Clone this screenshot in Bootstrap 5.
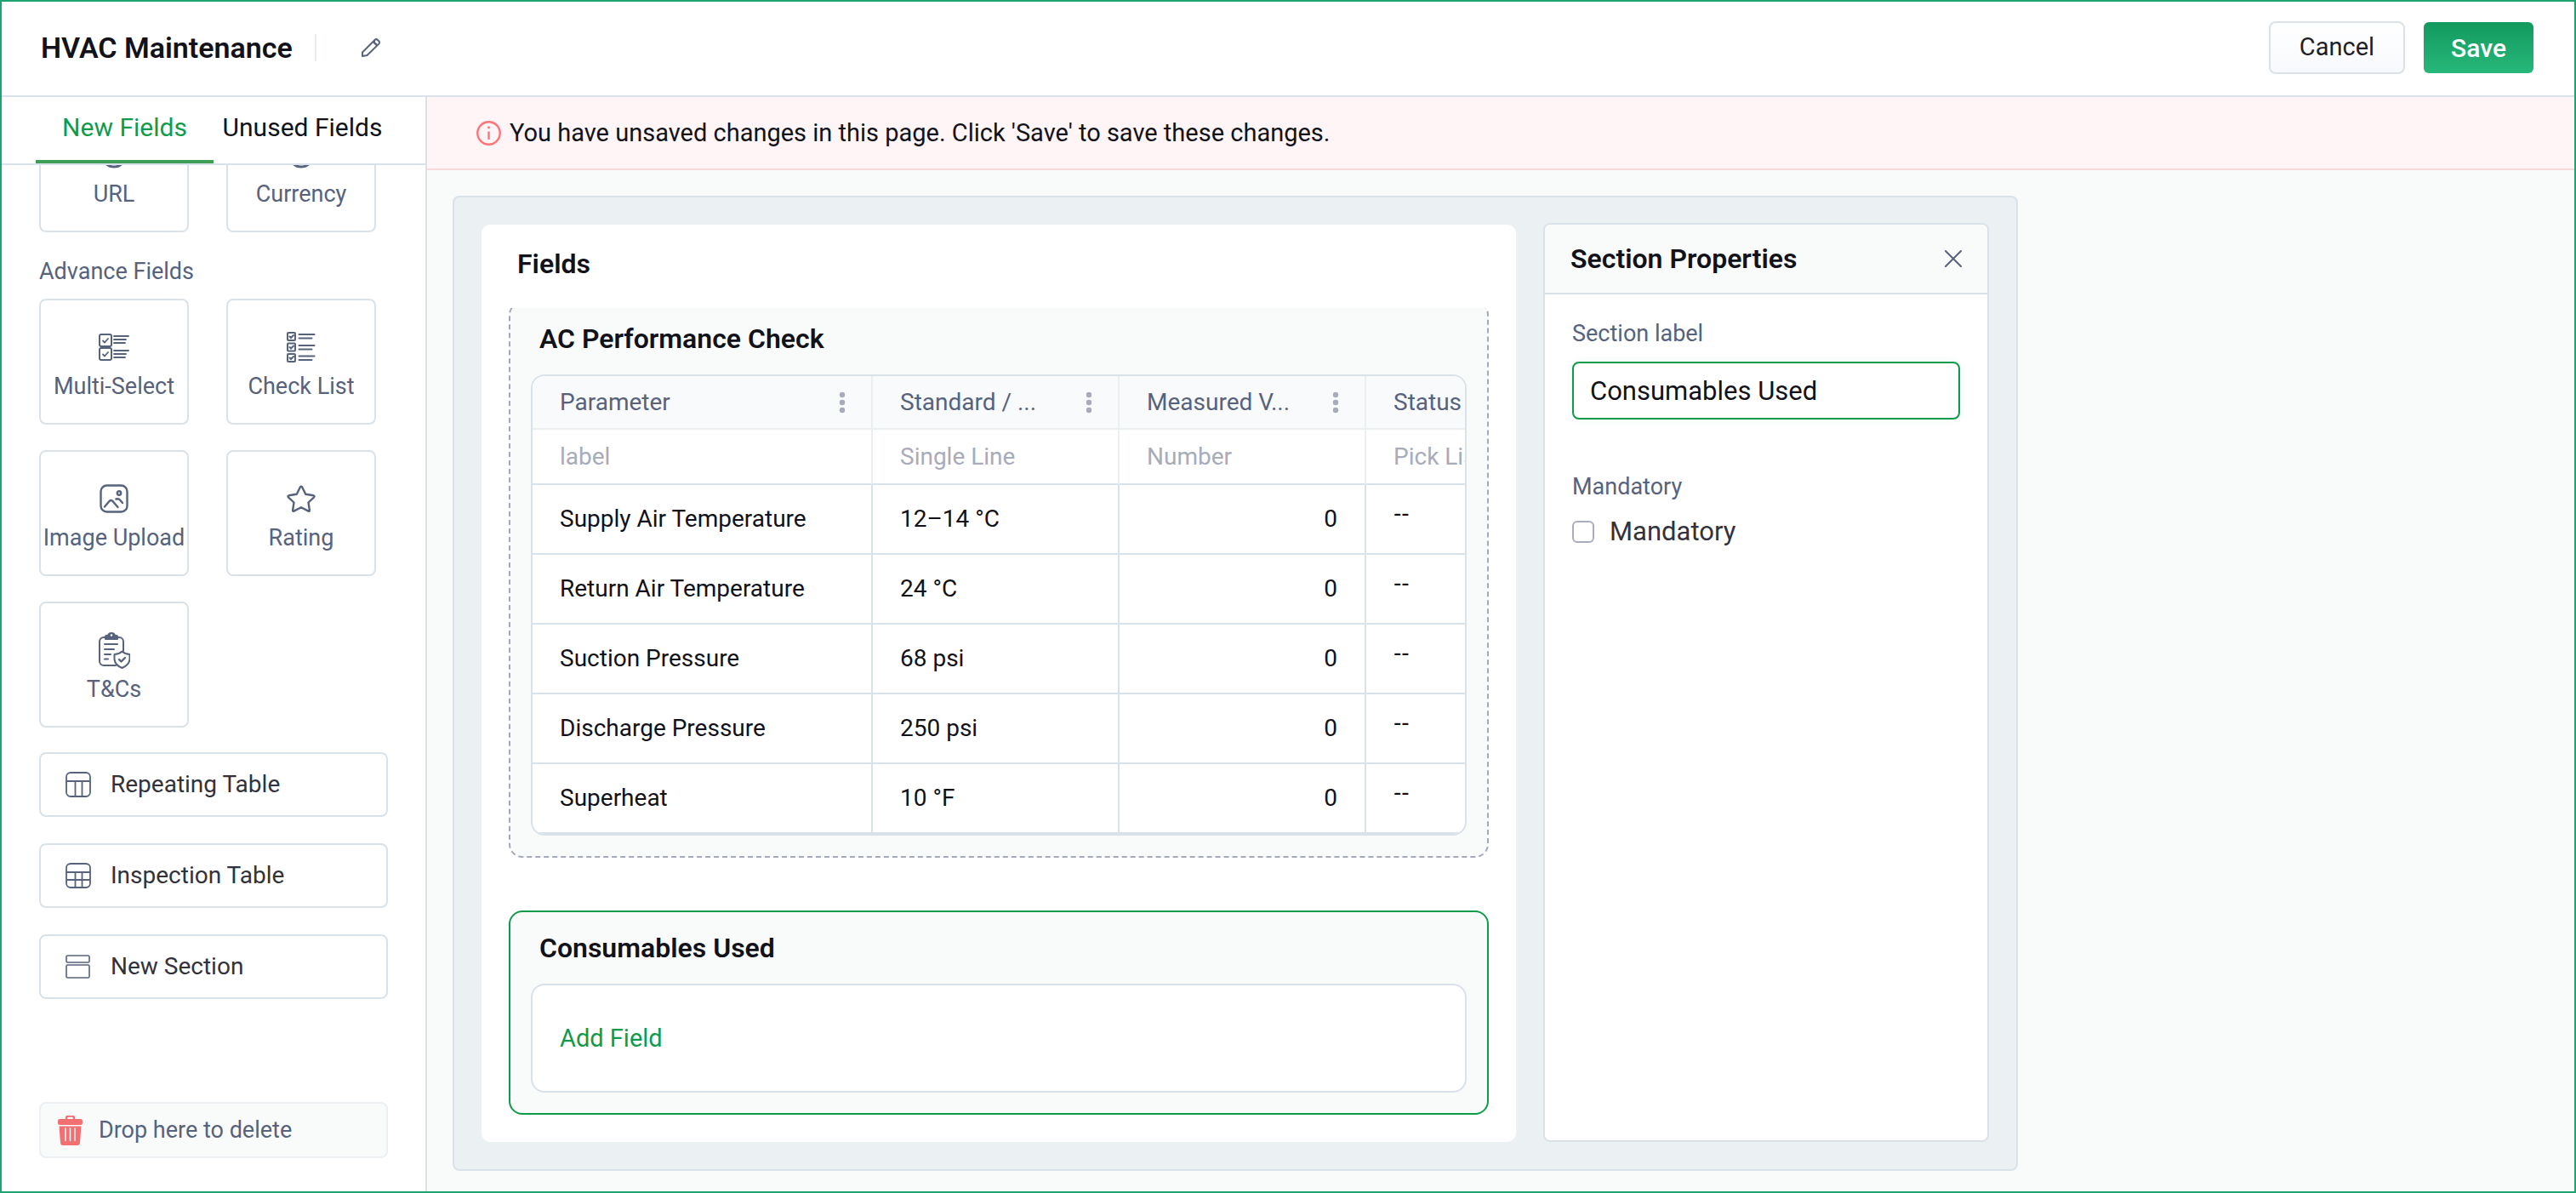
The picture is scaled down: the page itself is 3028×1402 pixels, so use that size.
<!DOCTYPE html>
<html lang="en">
<head>
<meta charset="utf-8">
<meta name="viewport" content="width=device-width, initial-scale=1">
<title>HVAC Maintenance</title>
<link href="https://cdn.jsdelivr.net/npm/bootstrap@5.3.0/dist/css/bootstrap.min.css" rel="stylesheet">
<style>
  :root { --line: #dae2e9; --slate: #57627c; --ink: #12121a; --green: #0f9b4a; --soft: #f9fbfa; }
  body { font-family: Roboto, "Liberation Sans", sans-serif; font-size: 28px; line-height: 36px; color: var(--ink); background: #fff; }
  button { font-family: inherit; }
  svg { display: block; flex: none; }
  .app-frame { height: 100vh; min-height: 1400px; border: 2px solid #1fa471; }
  .heading { font-size: 32px; line-height: 40px; font-weight: 600; margin: 0; }

  .top-bar { height: 112px; padding: 0 48px 2px 46px; border-bottom: 2px solid var(--line); }
  .top-bar h1 { font-size: 34px; line-height: 40px; font-weight: 600; margin: 0; }
  .top-actions { gap: 22px; }
  .divider-line { width: 2px; height: 32px; background: #e9eef1; margin: 0 52px 0 26px; }
  .icon-only { padding: 0; border: 0; background: none; color: var(--slate); }
  .btn-cancel, .btn-save { padding: 0 34px; border-radius: 8px; }
  .btn-cancel { height: 62px; font-size: 29px; border: 2px solid var(--line); color: #1e1f29; background: linear-gradient(#fff, #f7f9fc); }
  .btn-save { height: 60px; padding: 0 32px; font-size: 30px; font-weight: 500; border: 0; color: #fff; background: linear-gradient(#139a5e, #27b77a); border-radius: 6px; }

  .side { width: 500px; flex: none; border-right: 2px solid var(--line); }
  .work-row { min-height: 0; }
  .tab-strip { height: 80px; padding-left: 40px; border-bottom: 2px solid var(--line); flex: none; }
  .tab-strip .nav-link { padding: 0; font-size: 30px; line-height: 72px; height: 78px; border-radius: 0; color: var(--ink); width: 209px; text-align: center; border-bottom: 4px solid transparent; white-space: nowrap; }
  .tab-strip .nav-link.active { color: var(--green); border-bottom-color: #3f9e55; }
  .palette { padding: 0 44px; min-height: 0; }
  .palette-inner { margin-top: -69px; }
  .tile-grid { gap: 30px 44px; }
  .tile { display: flex; flex-direction: column; align-items: center; width: 176px; height: 148px; padding: 0; border: 2px solid var(--line); border-radius: 8px; background: #fff; color: var(--slate); font-size: 27px; line-height: 34px; white-space: nowrap; }
  .tile .pic { height: 84px; padding-top: 26px; display: flex; align-items: center; justify-content: center; }
  .group-name { height: 78px; padding-top: 14px; color: var(--slate); font-size: 27px; }
  .wide-list { margin-top: 29px; gap: 31px; }
  .wide-item { height: 76px; padding: 0 29px; gap: 23px; border: 2px solid var(--line); border-radius: 8px; background: #fff; color: #32323c; font-size: 28px; text-align: left; }
  .drop-zone { height: 66px; margin: 0 44px 39px; padding: 0 20px; gap: 19px; border: 2px solid #eaf0f3; border-radius: 8px; background: var(--soft); color: var(--slate); font-size: 27px; flex: none; }

  .work { min-width: 0; background: var(--soft); }
  .notice { height: 86px; padding: 0 58px; gap: 10px; background: #fff5f6; border-bottom: 2px solid #f7d9dc; font-size: 29px; }
  .stage { padding: 30px 30px 24px; }
  .board { max-width: 1840px; padding: 32px; gap: 32px; background: #ebf0f3; border: 2px solid var(--line); border-radius: 8px; }
  .sheet { min-width: 0; background: #fff; border-radius: 10px; padding-bottom: 32px; }
  .sheet-title { height: 98px; padding: 0 42px 6px; }
  .sheet-body { padding: 0 32px; overflow: hidden; }
  .block { border: 2px solid var(--green); border-radius: 16px; padding: 0 24px 24px; background: var(--soft); }
  .block.idle { border: 2px dashed #a6a9ba; margin: -8px 0 62px; }
  .block-title { height: 84px; padding: 0 10px; }
  .inset-box { border: 2px solid var(--line); border-radius: 16px; background: #fff; overflow: hidden; }
  .add-row { height: 128px; padding: 0 32px; font-size: 29px; }
  .add-row a { color: var(--green); text-decoration: none; }

  .field-table { table-layout: fixed; width: 1270px; margin: 0; border-collapse: separate; border-spacing: 0; }
  .field-table th, .field-table td { padding: 0 32px; font-weight: 400; white-space: nowrap; border-right: 2px solid var(--line); border-bottom: 2px solid var(--line); vertical-align: middle; }
  .field-table .names th { height: 63px; padding-right: 30px; background: #f9fafc; color: var(--slate); border-color: #eaf0f2; }
  .field-table .kinds td { height: 65px; color: #a7abba; border-right-color: #eaf0f2; }
  .field-table tbody td { height: 82px; }
  .field-table .blank { padding-bottom: 14px; font-family: "Liberation Sans", sans-serif; }
  .more { color: #a7abba; }

  .props { width: 524px; flex: none; margin-top: -2px; background: #fff; border: 2px solid var(--line); border-radius: 8px; overflow: hidden; }
  .props-head { height: 82px; padding: 0 30px; background: var(--soft); border-bottom: 2px solid var(--line); }
  .props-body { padding: 28px 32px; }
  .caption { display: block; font-size: 27px; line-height: 36px; color: var(--slate); margin: 0 0 15px; }
  .props .form-control { height: 68px; padding: 0 19px; font-size: 31px; color: var(--ink); border: 2px solid var(--green); border-radius: 8px; box-shadow: 0 0 12px #1fa47114; }
  .second-caption { margin: 61px 0 17px; }
  .tick { gap: 18px; }
  .tick .form-check-input { width: 26px; height: 26px; margin: 0; border: 2px solid #a9adbd; border-radius: 6px; }
  .tick label { font-size: 31px; color: #32323c; }
</style>
</head>
<body>
<div class="app-frame d-flex flex-column overflow-hidden">
  <header class="top-bar d-flex align-items-center flex-shrink-0">
    <h1>HVAC Maintenance</h1>
    <span class="divider-line"></span>
    <button class="icon-only" type="button" aria-label="Edit name">
      <svg width="24" height="24" viewBox="0 0 24 24" fill="none" stroke="currentColor" stroke-width="2" stroke-linejoin="round"><path d="M2 22v-4.500L16.500 3a2.500 2.500 0 0 1 3.500 0l1.300 1.300a2.300 2.300 0 0 1 0 3.300L7.500 21 2 22zM14.500 5l5 5M16 3.500l0 2.500 3 2.500"/></svg>
    </button>
    <div class="top-actions ms-auto d-flex align-items-center">
      <button class="btn btn-cancel" type="button">Cancel</button>
      <button class="btn btn-save" type="button">Save</button>
    </div>
  </header>

  <div class="work-row d-flex flex-grow-1">
    <aside class="side d-flex flex-column">
      <nav class="nav tab-strip flex-nowrap">
        <a class="nav-link active" href="#new">New Fields</a>
        <a class="nav-link" href="#unused">Unused Fields</a>
      </nav>
      <div class="palette flex-grow-1 overflow-hidden">
        <div class="palette-inner">
          <div class="tile-grid d-flex flex-wrap">
            <button class="tile" type="button"><span class="pic"><svg width="32" height="32" viewBox="0 0 32 32" fill="none" stroke="currentColor" stroke-width="3"><circle cx="16" cy="16" r="14"/></svg></span>URL</button>
            <button class="tile" type="button"><span class="pic"><svg width="32" height="32" viewBox="0 0 32 32" fill="none" stroke="currentColor" stroke-width="3"><circle cx="16" cy="16" r="14"/></svg></span>Currency</button>
          </div>
          <div class="group-name d-flex align-items-center">Advance Fields</div>
          <div class="tile-grid d-flex flex-wrap">
            <button class="tile" type="button"><span class="pic">
              <svg width="36" height="32" viewBox="0 0 36 32" fill="none" stroke="currentColor" stroke-width="2" stroke-linecap="round"><rect x="1" y="1" width="14" height="14" rx="2"/><rect x="1" y="17" width="14" height="14" rx="2"/><path d="M5 8.500l2 2 4-4.500M5 24.500l2 2 4-4.500M18 3h17M18 7h14M18 11h13M18 20h17M18 24h14M18 28h13" stroke-width="1.800"/></svg>
            </span>Multi-Select</button>
            <button class="tile" type="button"><span class="pic">
              <svg width="34" height="38" viewBox="0 0 34 38" fill="none" stroke="currentColor" stroke-width="2" stroke-linecap="round"><rect x="1" y="2" width="9" height="9" rx="1"/><rect x="1" y="14.500" width="9" height="9" rx="1"/><rect x="1" y="27" width="9" height="9" rx="1"/><path d="M3.500 6.500l1.500 1.500 3-3M3.500 19l1.500 1.500 3-3M3.500 31.500l1.500 1.500 3-3M14.500 4h18M14.500 8.500h15M14.500 17h18M14.500 21.500h15M14.500 29.500h18M14.500 34h15"/></svg>
            </span>Check List</button>
            <button class="tile" type="button"><span class="pic">
              <svg width="34" height="34" viewBox="0 0 34 34" fill="none" stroke="currentColor" stroke-width="2.400" stroke-linecap="round" stroke-linejoin="round"><rect x="1.500" y="1.500" width="31" height="31" rx="7"/><circle cx="23" cy="10.500" r="2.200"/><path d="M6 26.500l5.500-6.500q2-2 4 0l6 7M19.500 17.500q3-1 4.500 1l3 3.500"/></svg>
            </span>Image Upload</button>
            <button class="tile" type="button"><span class="pic">
              <svg width="34" height="32" viewBox="0 0 34 32" fill="none" stroke="currentColor" stroke-width="2.400" stroke-linejoin="round"><path d="M15.800 2.500q1.200-1.800 2.400 0l4 8.300 9.300 1.500q1.800.6.600 2l-6.600 6.200 1.400 9.300q0 1.400-1.400.8L17 26.200l-8.500 4.400q-1.400.6-1.400-.8l1.400-9.300L1.900 14.300q-1.200-1.400.6-2l9.300-1.500z"/></svg>
            </span>Rating</button>
            <button class="tile" type="button"><span class="pic">
              <svg width="38" height="44" viewBox="0 0 38 44" fill="none" stroke="currentColor" stroke-width="2" stroke-linecap="round" stroke-linejoin="round"><path d="M8 7H7a5 5 0 0 0-5 5v23a5 5 0 0 0 5 5h14M24 7h1a5 5 0 0 1 5 5v11"/><path d="M9 9V6q0-1 1-1h2q.5-3 4-3t4 3h2q1 0 1 1v3z" fill="currentColor"/><circle cx="16" cy="4.500" r="1.200" fill="#fff" stroke="none"/><path d="M8 15h15M8 21h11M8 27h7M8 32.500h4"/><path d="M28.500 23.500q4 3.500 9 3.500v6q-1 7-9 10-8-3-9-10v-6q5 0 9-3.500z" fill="#fff"/><path d="M25 33l2.500 2.500 4.500-4.500" stroke-width="2.400"/></svg>
            </span>T&amp;Cs</button>
          </div>
          <div class="wide-list d-flex flex-column">
            <button class="wide-item d-flex align-items-center" type="button">
              <svg width="30" height="30" viewBox="0 0 30 30" fill="none" stroke="#57627c" stroke-width="1.800"><rect x="1" y="1" width="28" height="28" rx="5"/><path d="M1 11h28M11.500 11v18M19.500 11v18"/></svg>Repeating Table</button>
            <button class="wide-item d-flex align-items-center" type="button">
              <svg width="30" height="30" viewBox="0 0 30 30" fill="none" stroke="#57627c" stroke-width="1.800"><rect x="1" y="1" width="28" height="28" rx="5"/><path d="M1 11h28M1 20h28M11.500 11v18M19.500 11v18"/></svg>Inspection Table</button>
            <button class="wide-item d-flex align-items-center" type="button">
              <svg width="30" height="28" viewBox="0 0 30 28" fill="none" stroke="#57627c" stroke-width="1.600"><rect x="1" y="1" width="27" height="8" rx="1.500"/><rect x="1" y="12" width="27" height="15" rx="1.500"/></svg>New Section</button>
          </div>
        </div>
      </div>
      <div class="drop-zone d-flex align-items-center">
        <svg width="29" height="35" viewBox="0 0 29 35"><path d="M10 5V3q0-2.500 2.500-2.500h4Q19 .5 19 3v2" fill="none" stroke="#f27072" stroke-width="2.400"/><rect x="0" y="4" width="29" height="7" rx="2.500" fill="#f27072"/><path d="M1.500 12.500h26L26 32q-.3 3-3 3H6q-2.700 0-3-3z" fill="#f27072"/><path d="M9 15v14.500M14.500 15v14.500M20 15v14.500" stroke="#fff" stroke-width="1.400" stroke-linecap="round"/></svg>
        Drop here to delete
      </div>
    </aside>

    <main class="work flex-grow-1 d-flex flex-column">
      <div class="notice d-flex align-items-center flex-shrink-0" role="alert">
        <svg width="29" height="29" viewBox="0 0 29 29" fill="none" stroke="#ff7378"><circle cx="14.500" cy="14.500" r="13.200" stroke-width="2.400"/><path d="M14.500 12.500v9.500" stroke-width="2.400"/><circle cx="14.500" cy="7.800" r="1.500" fill="#ff7378" stroke="none"/></svg>
        You have unsaved changes in this page. Click 'Save' to save these changes.
      </div>
      <div class="stage flex-grow-1 d-flex flex-column">
        <div class="board d-flex flex-grow-1">
          <section class="sheet flex-grow-1">
            <div class="sheet-title d-flex align-items-center"><h2 class="heading">Fields</h2></div>
            <div class="sheet-body">
              <div class="block idle">
                <div class="block-title d-flex align-items-center"><h3 class="heading">AC Performance Check</h3></div>
                <div class="inset-box">
                  <table class="field-table">
                    <colgroup><col style="width:400px"><col style="width:290px"><col style="width:290px"><col style="width:290px"></colgroup>
                    <thead>
                      <tr class="names">
                        <th scope="col"><div class="d-flex align-items-center justify-content-between">Parameter <svg class="more" width="8" height="26" viewBox="0 0 8 26" fill="currentColor"><circle cx="4" cy="4" r="3.200"/><circle cx="4" cy="13" r="3.200"/><circle cx="4" cy="22" r="3.200"/></svg></div></th>
                        <th scope="col"><div class="d-flex align-items-center justify-content-between">Standard / ... <svg class="more" width="8" height="26" viewBox="0 0 8 26" fill="currentColor"><circle cx="4" cy="4" r="3.200"/><circle cx="4" cy="13" r="3.200"/><circle cx="4" cy="22" r="3.200"/></svg></div></th>
                        <th scope="col"><div class="d-flex align-items-center justify-content-between">Measured V... <svg class="more" width="8" height="26" viewBox="0 0 8 26" fill="currentColor"><circle cx="4" cy="4" r="3.200"/><circle cx="4" cy="13" r="3.200"/><circle cx="4" cy="22" r="3.200"/></svg></div></th>
                        <th scope="col">Status</th>
                      </tr>
                      <tr class="kinds"><td>label</td><td>Single Line</td><td>Number</td><td>Pick List</td></tr>
                    </thead>
                    <tbody>
                      <tr><td>Supply Air Temperature</td><td>12–14 °C</td><td class="text-end">0</td><td class="blank">--</td></tr>
                      <tr><td>Return Air Temperature</td><td>24 °C</td><td class="text-end">0</td><td class="blank">--</td></tr>
                      <tr><td>Suction Pressure</td><td>68 psi</td><td class="text-end">0</td><td class="blank">--</td></tr>
                      <tr><td>Discharge Pressure</td><td>250 psi</td><td class="text-end">0</td><td class="blank">--</td></tr>
                      <tr><td>Superheat</td><td>10 °F</td><td class="text-end">0</td><td class="blank">--</td></tr>
                    </tbody>
                  </table>
                </div>
              </div>
              <div class="block">
                <div class="block-title d-flex align-items-center"><h3 class="heading">Consumables Used</h3></div>
                <div class="inset-box add-row d-flex align-items-center"><a href="#add">Add Field</a></div>
              </div>
            </div>
          </section>

          <aside class="props">
            <div class="props-head d-flex align-items-center justify-content-between">
              <h2 class="heading">Section Properties</h2>
              <button class="icon-only" type="button" aria-label="Close"><svg width="20" height="20" viewBox="0 0 20 20" fill="none" stroke="currentColor" stroke-width="2" stroke-linecap="round"><path d="M1 1l18 18M19 1L1 19"/></svg></button>
            </div>
            <div class="props-body">
              <label class="caption" for="section-label">Section label</label>
              <input class="form-control" id="section-label" type="text" value="Consumables Used">
              <span class="caption second-caption">Mandatory</span>
              <div class="tick d-flex align-items-center">
                <input class="form-check-input" id="mandatory" type="checkbox">
                <label for="mandatory">Mandatory</label>
              </div>
            </div>
          </aside>
        </div>
      </div>
    </main>
  </div>
</div>
<script src="https://cdn.jsdelivr.net/npm/bootstrap@5.3.0/dist/js/bootstrap.bundle.min.js"></script>
</body>
</html>
